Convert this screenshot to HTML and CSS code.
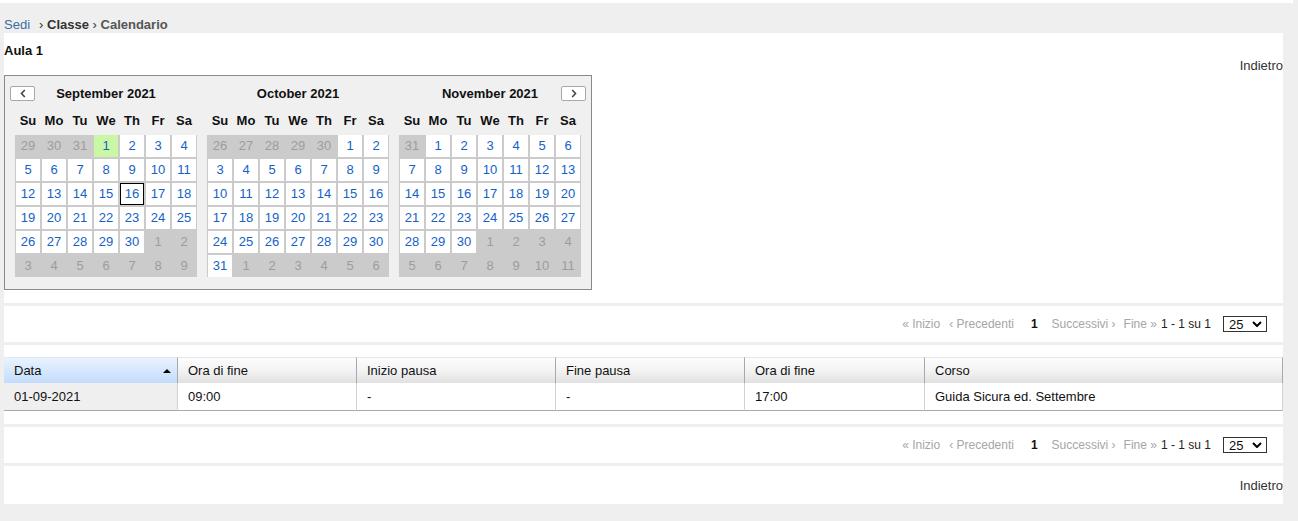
FILE: index.html
```html
<!DOCTYPE html>
<html>

	<head>
		<meta charset="UTF-8">
		<title>Calendario</title>
		<link rel="stylesheet" href="styles.css">
	</head>

	<body>
		<div class="topbar"></div>
		<div class="crumbs">
			<a class="home">Sedi</a><span class="sep first">›</span> <b>Classe</b> <span class="sep">›</span> <b class="last">Calendario</b>
		</div>

		<div class="panels">
			<div class="panel head-panel">
				<div class="title">Aula 1</div>
				<div class="back">Indietro</div>
				<div class="calendar">
					<span class="nav prev"><svg width="6" height="9" viewBox="0 0 6 9"><path d="M4.8 1L1.5 4.5L4.8 8" stroke="#444" stroke-width="1.6" fill="none"/></svg></span>
					<span class="nav next"><svg width="6" height="9" viewBox="0 0 6 9"><path d="M1.2 1L4.5 4.5L1.2 8" stroke="#444" stroke-width="1.6" fill="none"/></svg></span>
					<div class="month">
						<div class="month-title">September 2021</div>
						<div class="dow"><span>Su</span><span>Mo</span><span>Tu</span><span>We</span><span>Th</span><span>Fr</span><span>Sa</span></div>
						<div class="days"></div>
					</div>
					<div class="month">
						<div class="month-title">October 2021</div>
						<div class="dow"><span>Su</span><span>Mo</span><span>Tu</span><span>We</span><span>Th</span><span>Fr</span><span>Sa</span></div>
						<div class="days"></div>
					</div>
					<div class="month">
						<div class="month-title">November 2021</div>
						<div class="dow"><span>Su</span><span>Mo</span><span>Tu</span><span>We</span><span>Th</span><span>Fr</span><span>Sa</span></div>
						<div class="days"></div>
					</div>
				</div>
			</div>

			<div class="panel pager">
				<span class="off first">« Inizio</span>
				<span class="off prev-p">‹ Precedenti</span>
				<span class="cur">1</span>
				<span class="off next-p">Successivi ›</span>
				<span class="off end">Fine »</span>
				<span class="count">1 - 1 su 1</span>
				<span class="size">25<svg width="10" height="6" viewBox="0 0 10 6"><path d="M1 1l4 4 4-4" stroke="#000" stroke-width="2" fill="none"/></svg></span>
			</div>

			<div class="panel grid-panel">
				<table class="list">
					<colgroup>
						<col style="width:174px"><col style="width:179px"><col style="width:199px"><col style="width:189px"><col style="width:180px"><col style="width:358px">
					</colgroup>
					<thead>
						<tr>
							<th class="sorted"><div class="th-in">Data<i class="arrow"></i></div></th>
							<th>Ora di fine</th>
							<th>Inizio pausa</th>
							<th>Fine pausa</th>
							<th>Ora di fine</th>
							<th>Corso</th>
						</tr>
					</thead>
					<tbody>
						<tr>
							<td class="sorted">01-09-2021</td>
							<td>09:00</td>
							<td>-</td>
							<td>-</td>
							<td>17:00</td>
							<td>Guida Sicura ed. Settembre</td>
						</tr>
					</tbody>
				</table>
			</div>

			<div class="panel pager">
				<span class="off first">« Inizio</span>
				<span class="off prev-p">‹ Precedenti</span>
				<span class="cur">1</span>
				<span class="off next-p">Successivi ›</span>
				<span class="off end">Fine »</span>
				<span class="count">1 - 1 su 1</span>
				<span class="size">25<svg width="10" height="6" viewBox="0 0 10 6"><path d="M1 1l4 4 4-4" stroke="#000" stroke-width="2" fill="none"/></svg></span>
			</div>

			<div class="panel foot-panel">
				<div class="back">Indietro</div>
			</div>
		</div>

		<script type="text/javascript">
			//giorni dei tre mesi mostrati
			var months = [
				{ lead: [29, 30, 31], days: 30, sel: 1, today: 16 },
				{ lead: [26, 27, 28, 29, 30], days: 31 },
				{ lead: [31], days: 30 }
			];
			var boxes = document.querySelectorAll(".days");
			for(var m = 0; m < months.length; m++) {
				var mo = months[m];
				var html = "";
				var count = 0;
				for(var i = 0; i < mo.lead.length; i++) {
					html += "<span class='other'>" + mo.lead[i] + "</span>";
					count++;
				}
				for(var d = 1; d <= mo.days; d++) {
					var cls = "";
					if(d === mo.sel) cls = "sel";
					if(d === mo.today) cls = "today";
					html += "<span" + (cls ? " class='" + cls + "'" : "") + ">" + d + "</span>";
					count++;
				}
				for(var t = 1; count < 42; t++) {
					html += "<span class='other'>" + t + "</span>";
					count++;
				}
				boxes[m].innerHTML = html;
			}
		</script>
	</body>

</html>
```

FILE: styles.css
```css
* {
	margin: 0;
	padding: 0;
	box-sizing: border-box;
}

body {
	background: #efefef;
	font: 13px "Liberation Sans", Arial, sans-serif;
	color: #222;
}

.topbar {
	width: 1293px;
	height: 3px;
	background: #fff;
}

.crumbs {
	height: 30px;
	margin-left: 4px;
	padding-top: 14px;
	line-height: 15px;
	color: #333;
}

.crumbs .home {
	color: #3d6ca6;
}

.crumbs .sep.first {
	margin-left: 9px;
}

.crumbs .last {
	color: #555;
}

.panels {
	width: 1279px;
	margin-left: 4px;
	display: flex;
	flex-direction: column;
	gap: 3px;
}

.panel {
	background: #fff;
}

.head-panel {
	padding: 11px 0 13px;
}

.title {
	font-weight: bold;
	line-height: 14px;
	color: #111;
}

.back {
	text-align: right;
	line-height: 15px;
	color: #333;
}

/* calendario */
.calendar {
	position: relative;
	width: fit-content;
	margin-top: 2px;
	padding: 10px 10px 12px;
	display: flex;
	gap: 10px;
	border: 1px solid #8a8a8a;
	background: #f0f0f0;
}

.nav {
	position: absolute;
	top: 10px;
	width: 25px;
	height: 15px;
	display: flex;
	align-items: center;
	justify-content: center;
	border: 1px solid #a8a8a8;
	border-radius: 2px;
	background: #fff;
}

.nav.prev {
	left: 5px;
}

.nav.next {
	right: 5px;
}

.month {
	width: 182px;
}

.month-title {
	height: 15px;
	line-height: 15px;
	text-align: center;
	font-weight: bold;
	color: #111;
}

.dow,
.days {
	display: grid;
	grid-template-columns: repeat(7, 24px);
	column-gap: 2px;
	padding: 0 1px;
	text-align: center;
}

.dow {
	margin-top: 12px;
	line-height: 15px;
	font-weight: bold;
	color: #111;
}

.days {
	margin-top: 7px;
	grid-auto-rows: 22px;
	row-gap: 2px;
	background: #cbcbcb;
}

.days span {
	line-height: 22px;
	background: #fff;
	color: #1462c6;
}

.days span.other {
	background: none;
	color: #9d9d9d;
}

.days span.sel {
	background: #c9f7a5;
}

.days span.today {
	box-shadow: inset 0 0 0 1px #000;
}

/* paginazione */
.pager {
	height: 36px;
	padding-right: 16px;
	display: flex;
	justify-content: flex-end;
	align-items: center;
	font-size: 12px;
	color: #a6a6a6;
}

.pager .prev-p {
	margin-left: 9px;
}

.pager .cur {
	margin-left: 17px;
	font-weight: bold;
	color: #111;
}

.pager .next-p {
	margin-left: 14px;
}

.pager .end {
	margin-left: 8px;
}

.pager .count {
	margin-left: 4px;
	color: #222;
}

.size {
	width: 44px;
	height: 16px;
	margin-left: 12px;
	padding: 0 4px 0 5px;
	display: flex;
	align-items: center;
	justify-content: space-between;
	border: 1px solid #333;
	font-size: 13px;
	color: #111;
}

/* tabella */
.grid-panel {
	padding: 12px 0 13px;
}

.list {
	width: 100%;
	table-layout: fixed;
	border-collapse: separate;
	border-spacing: 0;
}

.list th {
	height: 26px;
	padding: 0 10px;
	text-align: left;
	font-weight: normal;
	color: #111;
	border-top: 1px solid #e2e7f1;
	border-right: 1px solid #a9a9a9;
	background: linear-gradient(#fdfdfd, #f3f3f3 50%, #e1e1e1);
}

.list th.sorted {
	padding-right: 6px;
	background: linear-gradient(#e9f3fe, #d6e8fd 50%, #c3dcfb);
}

.th-in {
	display: flex;
	justify-content: space-between;
	align-items: center;
}

.arrow {
	width: 0;
	height: 0;
	border-left: 4px solid transparent;
	border-right: 4px solid transparent;
	border-bottom: 4px solid #000;
}

.list td {
	height: 28px;
	padding: 0 10px;
	color: #111;
	border-right: 1px solid #d2d2d2;
	border-bottom: 1px solid #a9a9a9;
}

.list td.sorted {
	background: #efefef;
}

.foot-panel {
	padding: 12px 0 11px;
}
```
